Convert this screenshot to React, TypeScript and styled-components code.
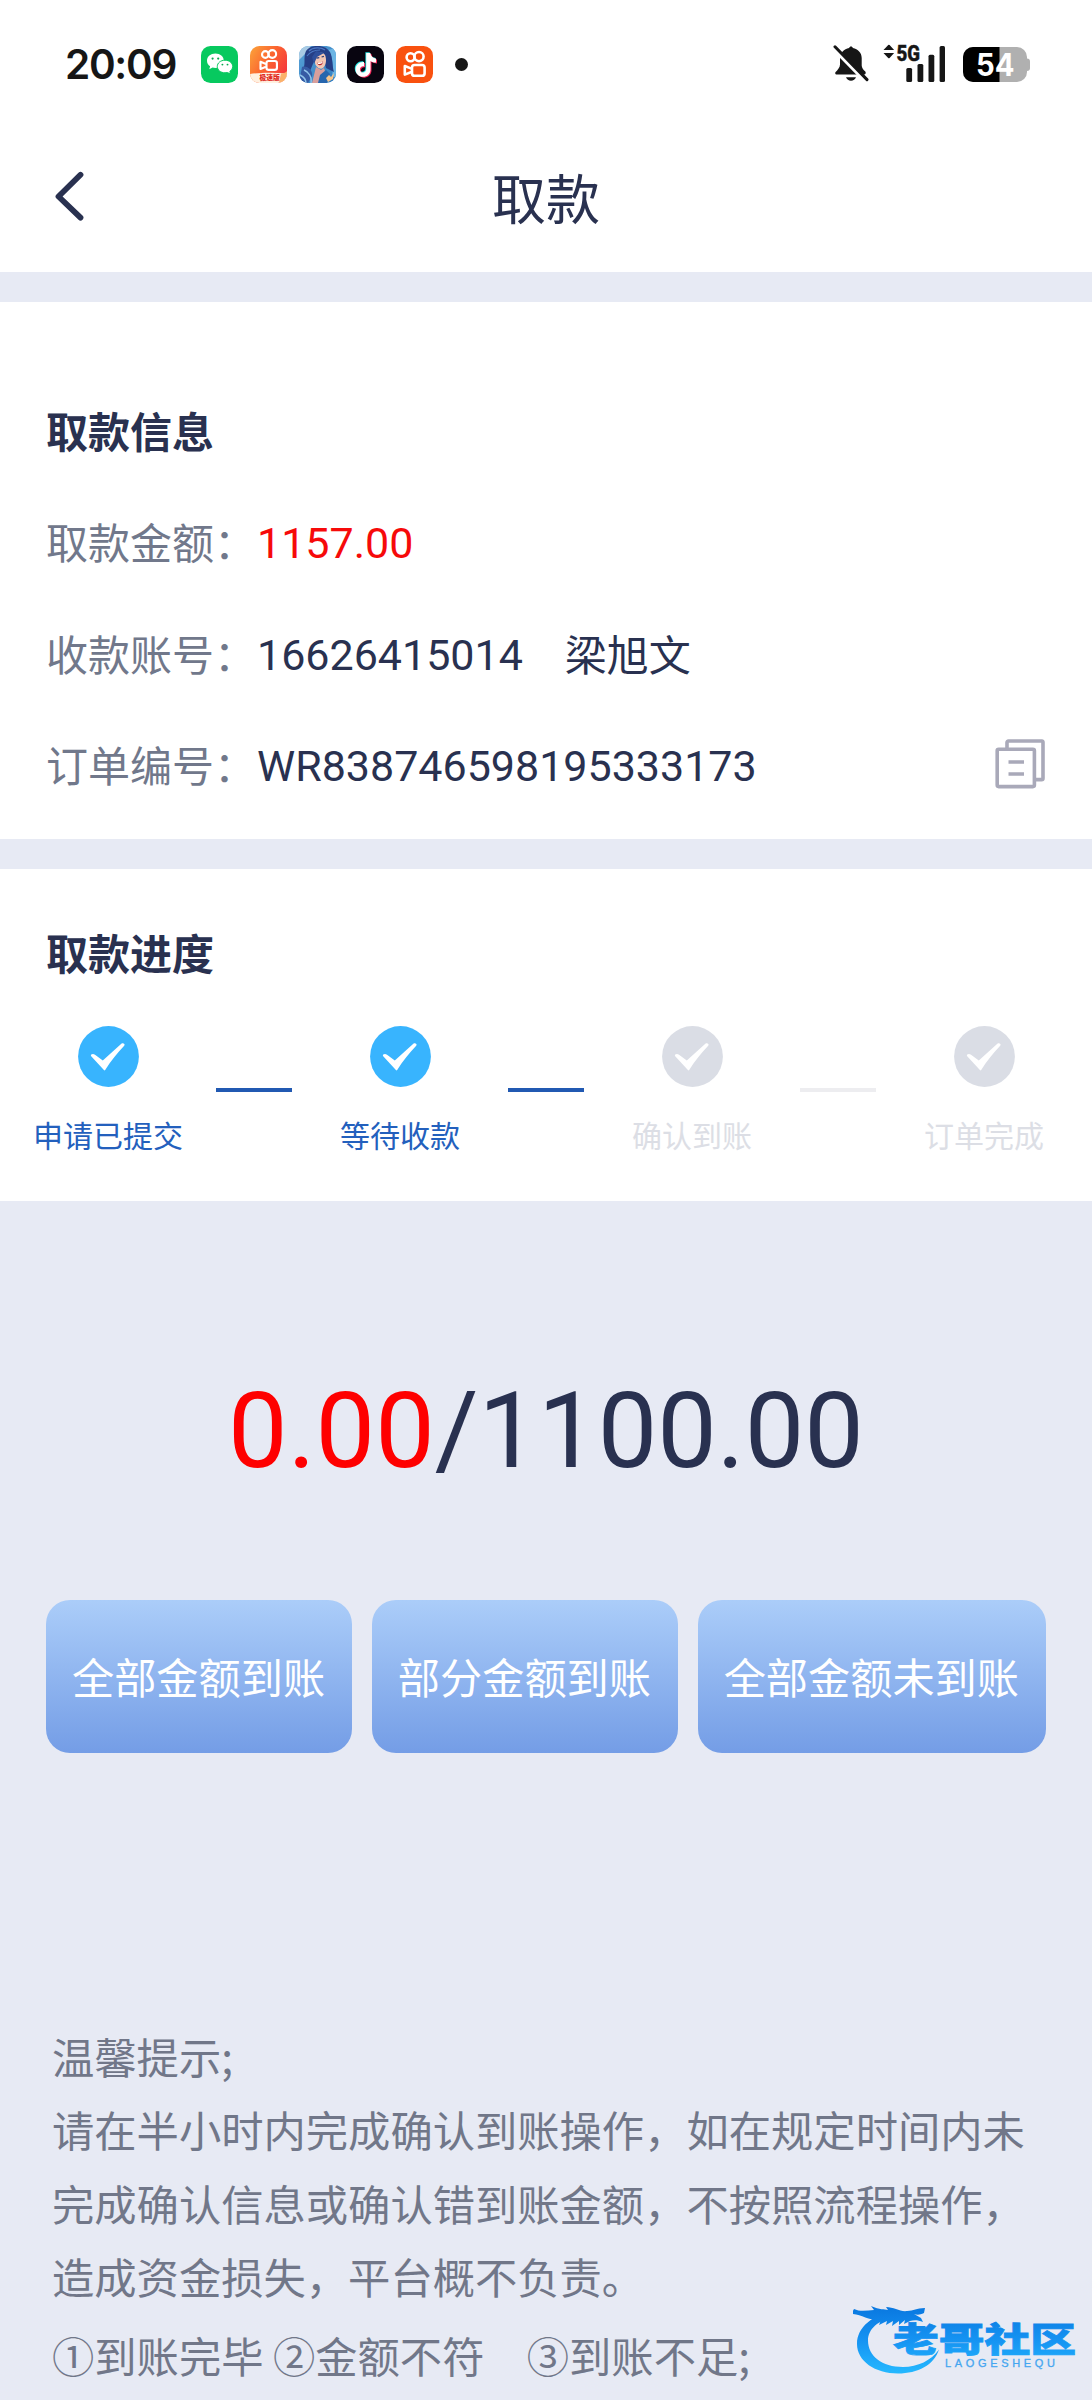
import { useId } from "react";
import styled, { createGlobalStyle } from "styled-components";

const steps = [
  { label: "申请已提交", done: true },
  { label: "等待收款", done: true },
  { label: "确认到账", done: false },
  { label: "订单完成", done: false },
];

const actions = ["全部金额到账", "部分金额到账", "全部金额未到账"];

const KwaiGlyph = () => (
  <g fill="none" stroke="#fff" strokeWidth="2.6" strokeLinejoin="round">
    <circle cx="14.6" cy="11.2" r="4" />
    <circle cx="23" cy="10.6" r="4.6" />
    <rect x="16" y="19" width="12.6" height="10.8" rx="2.6" />
    <path d="M15.4 22.6 8.8 20v8.600l6.6-2.6" />
  </g>
);

const WechatIcon = () => (
  <AppIcon viewBox="0 0 37 37">
    <rect width="37" height="37" rx="9.5" fill="#07c95f" />
    <path
      fill="#fff"
      d="M14.4 7.6c-4.700 0-8.400 3.100-8.400 7.100 0 2.300 1.200 4.200 3.100 5.500l-.8 3 3.300-1.700c.9.200 1.800.4 2.800.4 4.700 0 8.400-3.200 8.400-7.200s-3.700-7.100-8.400-7.100z"
    />
    <path
      fill="#fff"
      stroke="#07c95f"
      strokeWidth="1"
      d="M24 14.200c-4.400 0-7.700 2.800-7.700 6.300s3.300 6.300 7.700 6.300c.9 0 1.700-.1 2.500-.3l3 1.600-.7-2.700c1.700-1.200 2.900-2.900 2.900-4.900 0-3.500-3.300-6.300-7.700-6.300z"
    />
    <g fill="#07a94f">
      <circle cx="11.6" cy="12.6" r="1.1" />
      <circle cx="17.2" cy="12.6" r="1.1" />
      <circle cx="21.4" cy="18.6" r=".95" />
      <circle cx="26.5" cy="18.6" r=".95" />
    </g>
  </AppIcon>
);

const KwaiLiteIcon = () => (
  <AppIcon viewBox="0 0 37 37">
    <defs>
      <linearGradient id="kwai-lite" x1="0" y1="0" x2="1" y2=".6">
        <stop offset="0" stopColor="#fba53a" />
        <stop offset=".55" stopColor="#fb6330" />
        <stop offset="1" stopColor="#f53a3c" />
      </linearGradient>
      <clipPath id="kwai-lite-clip">
        <rect width="37" height="37" rx="9.5" />
      </clipPath>
    </defs>
    <g clipPath="url(#kwai-lite-clip)">
      <rect width="37" height="37" fill="url(#kwai-lite)" />
      <g transform="translate(3.2 -.8) scale(.83)">
        <KwaiGlyph />
      </g>
      <path d="M0 28c10-1.600 24-1.600 37-.6V37H0z" fill="#fff0e0" />
      <path d="M31 27.500c3 0 5-1 6-2.500v8l-5 4h-3z" fill="#fbb26a" />
      <text
        x="9.5"
        y="34.4"
        fontFamily="Noto Sans CJK SC, sans-serif"
        fontWeight="900"
        fontSize="6.8"
        fill="#e02b22"
      >
        极速版
      </text>
    </g>
  </AppIcon>
);

const GameIcon = () => (
  <AppIcon viewBox="0 0 37 37">
    <defs>
      <clipPath id="game-clip">
        <rect width="37" height="37" rx="9.5" />
      </clipPath>
      <linearGradient id="game-sky" x1="0" y1="0" x2="1" y2="1">
        <stop offset="0" stopColor="#5aa4d8" />
        <stop offset="1" stopColor="#2f7cc0" />
      </linearGradient>
    </defs>
    <g clipPath="url(#game-clip)">
      <rect width="37" height="37" fill="url(#game-sky)" />
      <path d="M0 0h12L5 9 0 14z" fill="#a9cbe4" />
      <path d="M29 4c5 7 6 16 4 26l4 2V2z" fill="#6cb5e4" />
      <path d="M7 5C12-2 26-2 31 6c3 6 2 14 4 20l-8-4-3-12-8 3-5 12-7-2c3-5 0-11 3-18z" fill="#263f86" />
      <path d="M10 5c4-4 12-4 16-1M8 10c3-4 8-6 13-6" stroke="#4a78c4" strokeWidth="1.2" fill="none" />
      <path d="M15 10c2-4 9-5 11-1 2 5 1 10-2 13-3 2-7-1-8-5z" fill="#f3c6b4" />
      <path d="m13 11 4-6 8 2-7 4-3 7z" fill="#2d4f9c" />
      <path d="M18 16.500c2 1 4 .6 6-1.500 0 5-4.500 6-6 1.500z" fill="#b3262e" />
      <path d="M18.500 16.800c1.700.5 3.600 0 5.200-1.200l-.4 1.500c-1.300 1-3 1.200-4.300.8z" fill="#fff" />
      <path d="M17.500 12.200l2.800-.5M22.600 11l2.300-.7" stroke="#2a3c75" strokeWidth="1.3" />
      <path d="m17 21 5 3 3-2 2 6-6 9h-8z" fill="#d99f9c" />
      <path d="M3 21c5-2 11 3 10 9l-4 7H0z" fill="#365ba4" />
      <path d="M5 24c5 2 8 7 7 13M1 29c4 2 6 5 6 8" stroke="#8fc4ea" strokeWidth="1.5" fill="none" />
      <path d="m21 29 6-5 4 4-3 9h-9z" fill="#2766ae" />
      <path d="m27 32 3-3 2 2 3-4-1 6-5 3z" fill="#f7c58b" />
    </g>
  </AppIcon>
);

const TikTokIcon = () => {
  const note =
    "M19.200 7h4.200c.4 3.200 2.400 5.200 5.600 5.500v4.100c-2.100 0-4-.6-5.500-1.700v8.300c0 4.700-3.400 7.600-7.400 7.600-4.200 0-7.500-3.200-7.500-7.400 0-4.500 3.800-7.900 8.500-7.300v4.300c-2.300-.6-4.200.9-4.200 3 0 1.800 1.400 3.200 3.100 3.200 1.900 0 3.200-1.300 3.200-3.500z";
  return (
    <AppIcon viewBox="0 0 37 37">
      <rect width="37" height="37" rx="9.5" fill="#080510" />
      <path d={note} fill="#25e6e4" transform="translate(-.8 -.8)" />
      <path d={note} fill="#f6265a" transform="translate(1 .9)" />
      <path d={note} fill="#fff" />
    </AppIcon>
  );
};

const KwaiIcon = () => (
  <AppIcon viewBox="0 0 37 37">
    <rect width="37" height="37" rx="9.5" fill="#f9510f" />
    <KwaiGlyph />
  </AppIcon>
);

const BellOffIcon = () => (
  <svg width="36" height="37" viewBox="0 0 36 37">
    <path
      fill="#161616"
      d="M18 1.500c1 0 1.700.6 1.900 1.600 5 .9 8.800 4.800 8.800 9.900v7.600c0 2 1.700 4.500 3.600 5.800.8.600.4 3-.6 3H3.400c-1.200 0-1.600-1.500-.8-2.400 2-2.200 4.400-4.600 4.400-7.600v-6.400c0-5.100 4-9 9.100-9.900.2-1 .9-1.600 1.900-1.600zM13 32.300h10c-.9 2.300-2.700 3.500-5 3.500s-4.100-1.200-5-3.500z"
    />
    <path d="M-1 2.200 31 35" stroke="#fff" strokeWidth="3.4" />
    <path d="M2 1.800 34 34.600" stroke="#161616" strokeWidth="3" strokeLinecap="round" />
  </svg>
);

const SignalIcon = () => (
  <svg width="64" height="40" viewBox="0 0 64 40">
    <g fill="#161616">
      <path d="m1.500 8 4.700-5a1 1 0 0 1 1.400 0L12.100 8zM1.500 11h10.600l-4.500 5a1 1 0 0 1-1.400 0z" />
      <text
        x="14.5"
        y="18.5"
        fontFamily="Roboto, sans-serif"
        fontWeight="800"
        fontSize="21.5"
        stroke="#161616"
        strokeWidth=".5"
        textLength="23.5"
        lengthAdjust="spacingAndGlyphs"
      >
        5G
      </text>
      <rect x="24.3" y="26" width="5.8" height="14" rx="1.5" />
      <rect x="35.5" y="22" width="5.8" height="18" rx="1.5" />
      <rect x="46.5" y="12.7" width="5.8" height="27.3" rx="1.5" />
      <rect x="57.6" y="4" width="5.4" height="36" rx="1.5" />
    </g>
  </svg>
);

const BatteryIcon = () => (
  <svg width="67" height="35" viewBox="0 0 67 35">
    <defs>
      <clipPath id="battery">
        <rect width="64" height="35" rx="10" />
      </clipPath>
    </defs>
    <rect x="58" y="11.5" width="9" height="12.5" rx="3" fill="#b0b0b0" />
    <g clipPath="url(#battery)">
      <rect width="64" height="35" fill="#b0b0b0" />
      <rect width="36.5" height="35" fill="#000" />
    </g>
    <text
      x="13"
      y="29"
      fontFamily="Inter, sans-serif"
      fontWeight="700"
      fontSize="31"
      fill="#fff"
      textLength="38.5"
      lengthAdjust="spacingAndGlyphs"
    >
      54
    </text>
  </svg>
);

const BackIcon = () => (
  <svg width="34" height="52" viewBox="0 0 34 52">
    <path
      d="M27.500 4.800 5.500 26.500l22 21.200"
      fill="none"
      stroke="#293150"
      strokeWidth="5.8"
      strokeLinecap="round"
      strokeLinejoin="round"
    />
  </svg>
);

const CopyIcon = () => (
  <svg width="50" height="50" viewBox="0 0 50 50" fill="none" stroke="#a9a9b9" strokeWidth="3.6">
    <rect x="2.2" y="10.2" width="37.2" height="37.4" rx="1.5" />
    <path d="M12 10V3.400a1.400 1.400 0 0 1 1.400-1.400h33.300A1.400 1.400 0 0 1 48 3.400v35.800a1.400 1.400 0 0 1-1.400 1.400H40" />
    <path d="M13.500 23h15.500M13.500 35h15.500" />
  </svg>
);

const CheckIcon = ({ done }: { done: boolean }) => (
  <svg width="61" height="61" viewBox="0 0 61 61">
    <circle cx="30.5" cy="30.5" r="30.4" fill={done ? "#38b4fe" : "#dadde5"} />
    <path
      fill="#fff"
      d="M13.200 28.600c1.300-.9 2.700-.6 3.800.2l7.800 5.800L43.600 17.600c1.500-1 4 .6 2.600 2.200-6.600 7.200-13.700 15.300-19 24.200-.4.600-.9.600-1.300 0l-12.700-13.700c-.5-.6-.5-1.200 0-1.700z"
    />
  </svg>
);

const CommunityLogo = () => {
  const id = useId();
  return (
    <Watermark width="226" height="72" viewBox="0 0 226 72">
      <defs>
        <linearGradient id={id} gradientUnits="userSpaceOnUse" x1="0" y1="4" x2="0" y2="70">
          <stop offset="0" stopColor="#0a78e0" />
          <stop offset=".5" stopColor="#1593f2" />
          <stop offset="1" stopColor="#25b8ff" />
        </linearGradient>
      </defs>
      <g fill={`url(#${id})`}>
        <path d="M42 9C20 11 4 24 4 41c0 17 18 29.500 41 29.500 20 0 36-8.500 41-24-8 11-21 17.500-36 17.500-21 0-35-11-35-26.500C15 26 25 17 42 14z" />
        <path d="M1 6c6 3 13 1.500 20 1l-3-4c9 4 13 3 17 4l-2-3c8 0 14 5 21 4 7 0 9-3 18-3l-1 5c-4 2-7 2-10 1l7 4 2 4c-5-2-9-2-13-1l-6 3 1-4-6 5v-4l-7 5 1-5-7 4 1-4-8 4 2-5c-10 2-20-6-30-6z" />
        <text
          x="40"
          y="49"
          fontFamily="Noto Sans CJK SC, sans-serif"
          fontWeight="900"
          fontSize="34"
          stroke={`url(#${id})`}
          strokeWidth=".8"
          textLength="183"
          lengthAdjust="spacingAndGlyphs"
        >
          老哥社区
        </text>
        <text
          x="92"
          y="63.5"
          fontFamily="Liberation Sans, sans-serif"
          fontSize="11"
          textLength="110"
          fill="#45a6f0"
          stroke="#45a6f0"
          strokeWidth=".3"
        >
          LAOGESHEQU
        </text>
      </g>
    </Watermark>
  );
};

const App = () => {
  return (
    <Page>
      <GlobalStyle />
      <StatusBar>
        <Time>20:09</Time>
        <AppIcons>
          <WechatIcon />
          <KwaiLiteIcon />
          <GameIcon />
          <TikTokIcon />
          <KwaiIcon />
        </AppIcons>
        <MoreDot />
        <SystemIcons>
          <BellOffIcon />
          <SignalIcon />
          <BatteryIcon />
        </SystemIcons>
      </StatusBar>
      <NavBar>
        <BackButton aria-label="返回">
          <BackIcon />
        </BackButton>
        <NavTitle>取款</NavTitle>
      </NavBar>

      <InfoSection>
        <SectionTitle>取款信息</SectionTitle>
        <InfoRow>
          <Label>取款金额：</Label>
          <Value $red>1157.00</Value>
        </InfoRow>
        <InfoRow>
          <Label>收款账号：</Label>
          <Value>16626415014</Value>
          <Payee>梁旭文</Payee>
        </InfoRow>
        <InfoRow>
          <Label>订单编号：</Label>
          <Value>WR838746598195333173</Value>
          <CopyButton aria-label="复制">
            <CopyIcon />
          </CopyButton>
        </InfoRow>
      </InfoSection>

      <ProgressSection>
        <SectionTitle>取款进度</SectionTitle>
        <Steps>
          {steps.map((step, i) => (
            <Step key={step.label} $column={i + 1} $done={step.done}>
              <CheckIcon done={step.done} />
              <span>{step.label}</span>
            </Step>
          ))}
          <Line $column={1} $done />
          <Line $column={2} $done />
          <Line $column={3} />
        </Steps>
      </ProgressSection>

      <Amount>
        <Received>0.00</Received>/1100.00
      </Amount>
      <Actions>
        {actions.map((label) => (
          <ActionButton key={label}>{label}</ActionButton>
        ))}
      </Actions>
      <Tips>
        <p>温馨提示;</p>
        <p>请在半小时内完成确认到账操作，如在规定时间内未完成确认信息或确认错到账金额，不按照流程操作，造成资金损失，平台概不负责。</p>
        <Options>①到账完毕 ②金额不符　③到账不足;</Options>
      </Tips>
      <CommunityLogo />
    </Page>
  );
};

export default App;

const GlobalStyle = createGlobalStyle`
  body {
    margin: 0;
    background: #e7eaf4;
  }
  * {
    box-sizing: border-box;
  }
  p, h1, h2 {
    margin: 0;
  }
  svg {
    display: block;
    flex-shrink: 0;
  }
  button {
    border: 0;
    padding: 0;
    background: none;
    font: inherit;
  }
`;

const Page = styled.main`
  position: relative;
  width: 1092px;
  height: 2400px;
  overflow: hidden;
  background: #e7eaf4;
  color: #293150;
  font-family: "Noto Sans CJK SC", sans-serif;
  font-size: 42px;
`;

const StatusBar = styled.div`
  display: flex;
  align-items: center;
  height: 128px;
  padding: 0 62px 0 65px;
  background: #fff;
`;

const Time = styled.span`
  width: 136px;
  padding-top: 1px;
  font-family: Inter, sans-serif;
  font-size: 40.5px;
  font-weight: 600;
  letter-spacing: -1.3px;
  line-height: 48px;
  color: #161616;
`;

const AppIcons = styled.div`
  display: flex;
  gap: 11.8px;
`;

const AppIcon = styled.svg`
  width: 37px;
  height: 37px;
`;

const MoreDot = styled.span`
  width: 13px;
  height: 13px;
  margin-left: 22px;
  border-radius: 50%;
  background: #161616;
`;

const SystemIcons = styled.div`
  display: flex;
  align-items: center;
  margin-left: auto;

  svg:nth-child(1) {
    margin-top: -2px;
  }
  svg:nth-child(2) {
    margin: -4px 17px 0 13px;
  }
`;

const NavBar = styled.header`
  display: grid;
  grid-template-columns: 84px 1fr 84px;
  align-items: center;
  height: 144px;
  padding: 0 53px;
  background: #fff;
`;

const BackButton = styled.button`
  margin-top: -8px;
`;

const NavTitle = styled.h1`
  padding-bottom: 7px;
  font-size: 54px;
  font-weight: 400;
  line-height: 80px;
  text-align: center;
`;

const InfoSection = styled.section`
  height: 537px;
  margin-top: 30px;
  padding: 98px 47px 0 46px;
  background: #fff;
`;

const SectionTitle = styled.h2`
  font-size: 42px;
  font-weight: 700;
  line-height: 60px;
`;

const InfoRow = styled.div`
  display: flex;
  align-items: center;
  height: 60px;
  margin-top: 51.3px;
  line-height: 60px;
  white-space: nowrap;
`;

const Label = styled.span`
  width: 211px;
  color: #71788b;
`;

const Value = styled.span<{ $red?: boolean }>`
  margin-top: 4px;
  font-family: Roboto, sans-serif;
  font-size: 43px;
  color: ${({ $red }) => ($red ? "#f60a0a" : "#293150")};
`;

const Payee = styled.span`
  margin-left: 42px;
`;

const CopyButton = styled.button`
  margin: 1px 0 0 auto;
`;

const ProgressSection = styled.section`
  height: 332px;
  margin-top: 30px;
  padding: 53px 0 0;
  background: #fff;

  ${SectionTitle} {
    padding-left: 46px;
  }
`;

const Steps = styled.div`
  display: grid;
  grid-template-columns: repeat(4, 292px);
  margin: 44px 0 0 -38px;
`;

const Step = styled.div<{ $column: number; $done: boolean }>`
  grid-row: 1;
  grid-column: ${({ $column }) => $column};
  display: flex;
  flex-direction: column;
  align-items: center;
  gap: 27px;
  font-size: 30px;
  line-height: 40px;
  color: ${({ $done }) => ($done ? "#2360bd" : "#dcdee5")};
`;

const Line = styled.i<{ $column: number; $done?: boolean }>`
  grid-row: 1;
  grid-column: ${({ $column }) => $column} / span 2;
  justify-self: center;
  width: 76px;
  height: 4px;
  margin-top: 62px;
  background: ${({ $done }) => ($done ? "#2159b2" : "#ededf0")};
`;

const Amount = styled.div`
  margin-top: 166px;
  font-family: Roboto, sans-serif;
  font-size: 106px;
  line-height: 128px;
  text-align: center;
`;

const Received = styled.span`
  color: #fe0000;
`;

const Actions = styled.div`
  display: flex;
  justify-content: space-between;
  margin-top: 105px;
  padding: 0 46px;
`;

const ActionButton = styled.button`
  height: 153px;
  padding: 0 27px 3px 26px;
  border-radius: 24px;
  background: linear-gradient(#abcdf9, #749de6);
  font-size: 42.2px;
  color: #fff;
`;

const Tips = styled.div`
  margin-top: 266px;
  padding: 0 52px;
  font-size: 42.3px;
  line-height: 73.3px;
  color: #717789;
`;

const Options = styled.p`
  margin-top: 6px;
  white-space: pre;
`;

const Watermark = styled.svg`
  position: absolute;
  left: 853px;
  top: 2303px;
`;
